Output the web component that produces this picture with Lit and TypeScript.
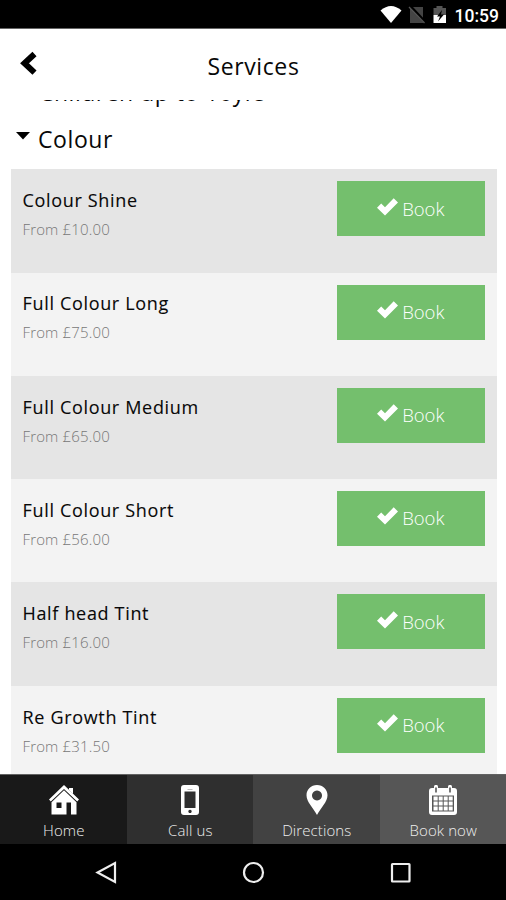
import { LitElement, html, css, svg } from "lit";
import { customElement, property } from "lit/decorators.js";

const services = [
  { name: "Colour Shine", price: "From £10.00" },
  { name: "Full Colour Long", price: "From £75.00" },
  { name: "Full Colour Medium", price: "From £65.00" },
  { name: "Full Colour Short", price: "From £56.00" },
  { name: "Half head Tint", price: "From £16.00" },
  { name: "Re Growth Tint", price: "From £31.50" },
];

const homeIcon = svg`
  <path d="M20 3h4v6l-4-4z"/>
  <path d="M15 0L30 14.400l-1.800 2.200L15 4 1.800 16.600 0 14.400z"/>
  <path fill-rule="evenodd" d="M15 5.200L27.500 17.300V29.500H22V17.500H17.500V29.500H2.500V17.300zM7.500 17.500v5.500h5v-5.500z"/>`;
const phoneIcon = svg`
  <path fill-rule="evenodd" d="M9 0h12a3 3 0 0 1 3 3v24a3 3 0 0 1-3 3H9a3 3 0 0 1-3-3V3a3 3 0 0 1 3-3zM9.500 6.500v16.500h11v-16.500zM15 24.700a1.700 1.700 0 1 0 .01 0z"/>
  <path d="M12.500 4h5v1h-5z" fill="#bbb"/>`;
const pinIcon = svg`
  <path fill-rule="evenodd" d="M15 0c6 0 10.500 4.500 10.500 10.200C25.500 17 18.500 23 15 30 11.500 23 4.500 17 4.500 10.200 4.500 4.500 9 0 15 0zM15 5.500a5 5 0 1 0 .01 0z"/>`;
const calendarIcon = svg`
  <path fill-rule="evenodd" d="M4 3h2V1.800a2 2 0 0 1 4 0V3h10V1.800a2 2 0 0 1 4 0V3h2a3 3 0 0 1 3 3v21a3 3 0 0 1-3 3H4a3 3 0 0 1-3-3V6a3 3 0 0 1 3-3zM4 10.500V26.500H26V10.500zM7.200 2.500v5h1.600v-5zM21.200 2.500v5h1.600v-5z"/>
  <path d="M5.500 11.500h4.200v4H5.500zM10.700 11.500h4v4h-4zM15.700 11.500h4v4h-4zM20.700 11.500h4v4h-4zM5.500 16.500h4.200v4H5.500zM10.700 16.500h4v4h-4zM15.700 16.500h4v4h-4zM20.700 16.500h4v4h-4zM5.500 21.500h4.200v4H5.500zM10.700 21.500h4v4h-4zM15.700 21.500h4v4h-4zM20.700 21.500h4v4h-4z"/>`;

const tabs = [
  { label: "Home", tone: "t1", icon: homeIcon },
  { label: "Call us", tone: "t2", icon: phoneIcon },
  { label: "Directions", tone: "t3", icon: pinIcon },
  { label: "Book now", tone: "t4", icon: calendarIcon },
];

@customElement("service-row")
class ServiceRow extends LitElement {
  @property() name = "";
  @property() price = "";

  static styles = css`
    :host {
      display: flex;
      justify-content: space-between;
      box-sizing: border-box;
      height: 103.300px;
      flex: none;
      padding: 12px 12px 0 11.500px;
    }
    .name {
      font-size: 18px;
      line-height: 25px;
      letter-spacing: 0.67px;
      margin-top: 6.800px;
      color: #080808;
      -webkit-text-stroke: 0.1px #080808;
    }
    .price {
      font-size: 15px;
      line-height: 20px;
      font-weight: 300;
      letter-spacing: 0.15px;
      margin-top: 6px;
      color: #777;
    }
    .book {
      font: 300 18.500px/26px "Open Sans", sans-serif;
      display: flex;
      justify-content: center;
      align-items: center;
      box-sizing: border-box;
      width: 148px;
      height: 55px;
      padding: 0 1px 0.500px 0;
      border: 0;
      border-radius: 0;
      background: #74bf6d;
      color: #fff;
      gap: 4.500px;
    }
    .check {
      width: 21px;
      height: 18px;
      margin-top: -4px;
    }
  `;

  render() {
    return html`
      <div>
        <div class="name">${this.name}</div>
        <div class="price">${this.price}</div>
      </div>
      <button class="book">
        <svg class="check" viewBox="0 0 21 18"><path fill="#fff" d="M0 9.700L4.200 5.500l3.800 3.800L16.700 .3 21 4.500 8 17.500z"/></svg>
        <span>Book</span>
      </button>
    `;
  }
}

@customElement("app-root")
class AppRoot extends LitElement {
  static styles = css`
    :host {
      display: flex;
      flex-direction: column;
      width: 506px;
      height: 900px;
      overflow: hidden;
      background: #fff;
      color: #080808;
      font-family: "Open Sans", sans-serif;
      white-space: nowrap;
    }
    .status {
      height: 29px;
      flex: none;
      box-sizing: border-box;
      background: #000;
      border-bottom: 1px solid #666;
      display: flex;
      justify-content: flex-end;
      padding-right: 9px;
      color: #fff;
    }
    .status svg { width: 70px; height: 28px; margin-right: 4.500px; }
    .clock {
      font: 500 17.500px/32px Roboto, sans-serif;
      width: 42.500px;
    }
    .header {
      height: 71px;
      flex: none;
      display: grid;
      grid-template-columns: 60px 1fr 60px;
      align-items: center;
    }
    .back { width: 18px; height: 24px; margin: -4px 0 0 20px; }
    .title {
      text-align: center;
      font-size: 23px;
      line-height: 32px;
      letter-spacing: 0.6px;
      margin-top: 2px;
      padding-left: 1px;
    }
    .content {
      height: 674px;
      flex: none;
      overflow: hidden;
      display: flex;
      flex-direction: column;
    }
    .group {
      font-size: 23px;
      line-height: 32px;
      letter-spacing: 0.6px;
      flex: none;
      height: 32px;
      display: flex;
      padding-left: 16px;
    }
    .group.previous { margin-top: -24px; padding-left: 39px; letter-spacing: 0.5px; }
    .group.current { margin: 15.300px 0 14px; }
    .caret { width: 14px; height: 8px; margin: 8.500px 8px 0 0; }
    .list {
      margin: 0 9px 0 11px;
      flex: none;
      display: flex;
      flex-direction: column;
    }
    service-row:nth-child(odd) { background: #e5e5e5; }
    service-row:nth-child(even) { background: #f3f3f3; }
    .tabs {
      height: 70px;
      flex: none;
      display: grid;
      grid-template-columns: repeat(4, 1fr);
      box-sizing: border-box;
      border-top: 1px solid #626262;
    }
    .tab {
      display: flex;
      flex-direction: column;
      align-items: center;
      padding: 9.500px 0 0 1px;
      color: #eee;
      font-size: 15px;
      line-height: 20px;
      font-weight: 300;
      letter-spacing: 0.1px;
    }
    .tab svg { width: 30px; height: 30px; fill: #fff; margin-bottom: 5.500px; }
    .t1 { background: #191919; }
    .t2 { background: #2f2f2f; }
    .t3 { background: #424242; }
    .t4 { background: #565656; }
    .system {
      flex: 1;
      background: #000;
      display: flex;
      justify-content: space-between;
      padding: 17px 94px 0 95px;
    }
    .system svg { width: 23px; height: 23px; fill: none; stroke: #eee; stroke-width: 2.200; }
  `;

  render() {
    return html`
      <div class="status">
        <svg viewBox="0 0 70 28">
          <path fill="#fff" d="M.5 10.500Q11 1.500 21.500 10.500L11 23z"/>
          <path fill="#444" d="M30 7h13v16H30z"/>
          <path stroke="#000" stroke-width="3" d="M30 6l16 17"/>
          <path stroke="#555" stroke-width="1.300" d="M29 7l15.500 16"/>
          <path fill="#555" d="M53.500 8h3V6h6v2h3.500v7H53.500z"/>
          <path fill="#fff" d="M53.500 15h12.500v8H53.500z"/>
          <path fill="#000" d="M62 10l-5 6.500h3l-2 5 6-7h-3z"/>
        </svg>
        <div class="clock">10:59</div>
      </div>
      <div class="header">
        <svg class="back" viewBox="0 0 18 24"><path fill="none" stroke="#000" stroke-width="6" d="M14.500 3L4.500 12.300l10 9.300"/></svg>
        <div class="title">Services</div>
      </div>
      <div class="content">
        <div class="group previous">Children up to 16yrs</div>
        <div class="group current">
          <svg class="caret" viewBox="0 0 14 8"><path d="M0 0h14L7 7.500z"/></svg>
          <span>Colour</span>
        </div>
        <div class="list">
          ${services.map((s) => html`<service-row .name=${s.name} .price=${s.price}></service-row>`)}
        </div>
      </div>
      <div class="tabs">
        ${tabs.map((t) => html`
          <div class="tab ${t.tone}">
            <svg viewBox="0 0 30 30">${t.icon}</svg>
            <span>${t.label}</span>
          </div>`)}
      </div>
      <div class="system">
        <svg viewBox="0 0 23 23"><path d="M20 2v19L2.500 11.500z"/></svg>
        <svg viewBox="0 0 23 23"><circle cx="11.500" cy="11.500" r="9.500"/></svg>
        <svg viewBox="0 0 23 23"><rect x="3" y="3" width="17.500" height="17.500" rx=".5"/></svg>
      </div>
    `;
  }
}
